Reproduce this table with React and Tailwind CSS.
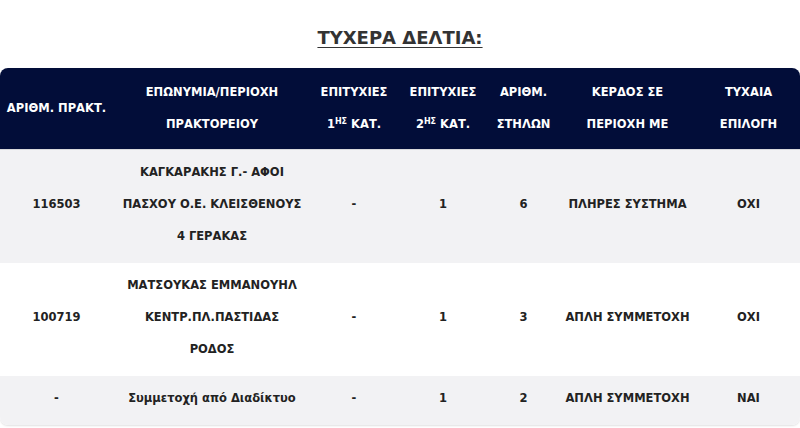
import React from "react";

const rows = [
  {
    code: "116503",
    name: ["ΚΑΓΚΑΡΑΚΗΣ Γ.- ΑΦΟΙ", "ΠΑΣΧΟΥ Ο.Ε. ΚΛΕΙΣΘΕΝΟΥΣ", "4 ΓΕΡΑΚΑΣ"],
    c1: "-",
    c2: "1",
    cols: "6",
    gain: "ΠΛΗΡΕΣ ΣΥΣΤΗΜΑ",
    rnd: "ΟΧΙ",
    bg: "bg-[#f2f2f4]",
  },
  {
    code: "100719",
    name: ["ΜΑΤΣΟΥΚΑΣ ΕΜΜΑΝΟΥΗΛ", "ΚΕΝΤΡ.ΠΛ.ΠΑΣΤΙΔΑΣ", "ΡΟΔΟΣ"],
    c1: "-",
    c2: "1",
    cols: "3",
    gain: "ΑΠΛΗ ΣΥΜΜΕΤΟΧΗ",
    rnd: "ΟΧΙ",
    bg: "bg-white",
  },
  {
    code: "-",
    name: ["Συμμετοχή από Διαδίκτυο"],
    c1: "-",
    c2: "1",
    cols: "2",
    gain: "ΑΠΛΗ ΣΥΜΜΕΤΟΧΗ",
    rnd: "ΝΑΙ",
    bg: "bg-[#f2f2f4]",
  },
];

export default function App() {
  return (
    <div
      className="w-[800px] h-[428px] bg-white overflow-hidden"
      style={{ fontFamily: '"DejaVu Sans", Verdana, sans-serif' }}
    >
      <h2 className="pt-[27px] h-[68px] text-center text-[18px] font-bold text-[#333] underline underline-offset-[3px] leading-[22px]">
        ΤΥΧΕΡΑ ΔΕΛΤΙΑ:
      </h2>
      <div className="rounded-lg overflow-hidden shadow-[0_1px_2px_rgba(0,0,0,0.12)]">
        <table className="w-[800px] table-fixed border-collapse text-[11.5px] font-bold leading-[32px] text-center">
          <colgroup>
            <col className="w-[113px]" />
            <col className="w-[198px]" />
            <col className="w-[86px]" />
            <col className="w-[92px]" />
            <col className="w-[69px]" />
            <col className="w-[139px]" />
            <col className="w-[103px]" />
          </colgroup>
          <thead>
            <tr className="bg-[#020d39] text-white border-b border-[#d8d8dc]">
              <th className="h-[81px] px-0 py-2">ΑΡΙΘΜ. ΠΡΑΚΤ.</th>
              <th className="py-2">
                ΕΠΩΝΥΜΙΑ/ΠΕΡΙΟΧΗ
                <br />
                ΠΡΑΚΤΟΡΕΙΟΥ
              </th>
              <th className="py-2">
                ΕΠΙΤΥΧΙΕΣ
                <br />
                1<sup className="text-[8px]">ΗΣ</sup> ΚΑΤ.
              </th>
              <th className="py-2">
                ΕΠΙΤΥΧΙΕΣ
                <br />
                2<sup className="text-[8px]">ΗΣ</sup> ΚΑΤ.
              </th>
              <th className="py-2">
                ΑΡΙΘΜ.
                <br />
                ΣΤΗΛΩΝ
              </th>
              <th className="py-2">
                ΚΕΡΔΟΣ ΣΕ
                <br />
                ΠΕΡΙΟΧΗ ΜΕ
              </th>
              <th className="py-2">
                ΤΥΧΑΙΑ
                <br />
                ΕΠΙΛΟΓΗ
              </th>
            </tr>
          </thead>
          <tbody className="text-[#222]">
            {rows.map((r, i) => (
              <tr key={i} className={r.bg}>
                <td className="pt-[6px] pb-[11px]">{r.code}</td>
                <td className="pt-[6px] pb-[11px]">
                  {r.name.map((n, j) => (
                    <div key={j}>{n}</div>
                  ))}
                </td>
                <td className="pt-[6px] pb-[11px]">{r.c1}</td>
                <td className="pt-[6px] pb-[11px]">{r.c2}</td>
                <td className="pt-[6px] pb-[11px]">{r.cols}</td>
                <td className="pt-[6px] pb-[11px]">{r.gain}</td>
                <td className="pt-[6px] pb-[11px]">{r.rnd}</td>
              </tr>
            ))}
          </tbody>
        </table>
      </div>
    </div>
  );
}
